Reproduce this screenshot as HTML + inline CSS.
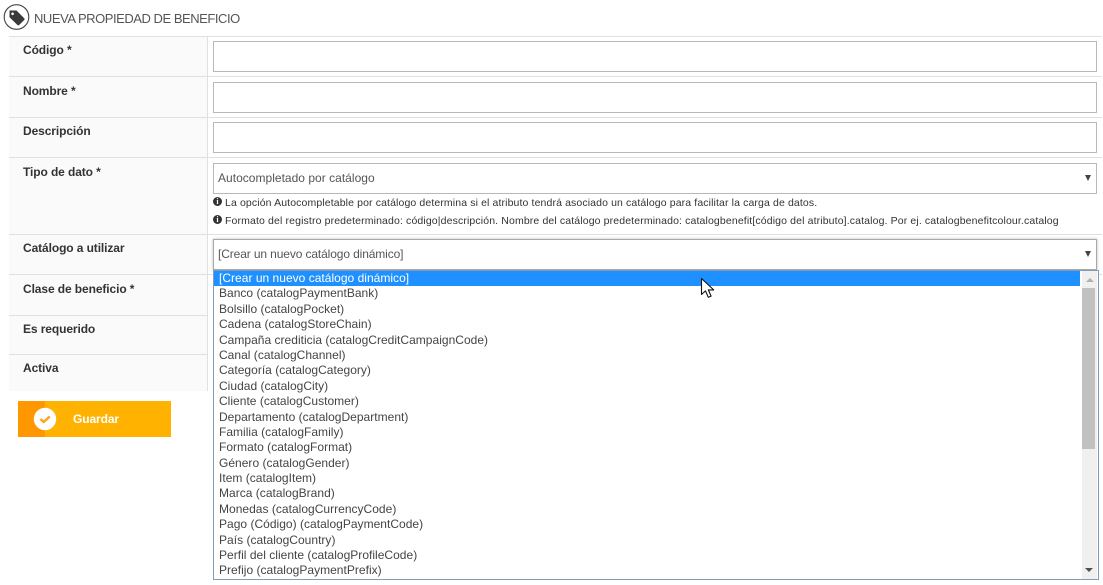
<!DOCTYPE html>
<html lang="es"><head><meta charset="utf-8"><title>Nueva propiedad de beneficio</title>
<style>
html,body{margin:0;padding:0;background:#fff;width:1103px;height:585px;overflow:hidden}
body{position:relative;font-family:"Liberation Sans",sans-serif;color:#333}
.a{position:absolute;white-space:nowrap}
.line{position:absolute;background:#e0e0e0;height:1px;left:9px;width:1093px}
.lbl{position:absolute;left:23px;font-size:12px;font-weight:bold;color:#333;line-height:14px;white-space:nowrap;letter-spacing:-.1px}
.inp{position:absolute;left:213px;width:882px;background:#fff;border:1px solid #b8b8b8;height:29px}
.val{position:absolute;left:218px;font-size:12px;line-height:14px;color:#555;white-space:nowrap;letter-spacing:.02px}
.help{position:absolute;left:225px;font-size:10.5px;line-height:13px;color:#333;white-space:nowrap;letter-spacing:.12px}
.inf{position:absolute;left:213px;width:9px;height:9px;background:#333;border-radius:50%;color:#fff;font:bold 8px/9px "Liberation Serif",serif;text-align:center}
.arr{position:absolute;left:1085px;width:0;height:0;border-left:3px solid transparent;border-right:3px solid transparent;border-top:6px solid #444}
.opt{position:absolute;left:219px;font-size:12px;line-height:15px;color:#444;white-space:nowrap;letter-spacing:.02px}
</style></head><body>
<div class="a" style="left:9px;top:37px;width:198px;height:354px;background:#fafafa"></div>
<div class="a" style="left:207px;top:37px;width:1px;height:354px;background:#e0e0e0"></div>
<div class="line" style="top:36px"></div>
<div class="line" style="top:76px"></div>
<div class="line" style="top:117px"></div>
<div class="line" style="top:157px"></div>
<div class="line" style="top:234px"></div>
<div class="line" style="top:274px"></div>
<div class="line" style="top:315px;width:199px"></div>
<div class="line" style="top:354px;width:199px"></div>

<svg class="a" style="left:3px;top:4px" width="27" height="27" viewBox="0 0 27 27">
<circle cx="13.5" cy="13" r="12.3" fill="#fff" stroke="#444" stroke-width="1.1"/>
<path d="M6.5 6.5h7l7.6 7.6a1.4 1.4 0 0 1 0 2l-4.8 4.8a1.4 1.4 0 0 1-2 0L6.5 13.3z" fill="#3a3a3a"/>
<circle cx="9.6" cy="9.8" r="1.3" fill="#fff"/>
</svg>
<div class="a" style="left:34px;top:11px;font-size:13px;line-height:15px;color:#555;letter-spacing:-.46px">NUEVA PROPIEDAD DE BENEFICIO</div>

<div class="lbl" style="top:43px">Código *</div>
<div class="lbl" style="top:84px">Nombre *</div>
<div class="lbl" style="top:124px">Descripción</div>
<div class="lbl" style="top:165px">Tipo de dato *</div>
<div class="lbl" style="top:241px">Catálogo a utilizar</div>
<div class="lbl" style="top:282px">Clase de beneficio *</div>
<div class="lbl" style="top:322px">Es requerido</div>
<div class="lbl" style="top:361px">Activa</div>

<div class="inp" style="top:41px"></div>
<div class="inp" style="top:82px"></div>
<div class="inp" style="top:122px"></div>
<div class="inp" style="top:163px"></div>
<div class="val" style="top:171px">Autocompletado por catálogo</div>
<div class="arr" style="top:175px"></div>

<div class="inf" style="top:197px">i</div>
<div class="help" style="top:197px">La opción Autocompletable por catálogo determina si el atributo tendrá asociado un catálogo para facilitar la carga de datos.</div>
<div class="inf" style="top:215px">i</div>
<div class="help" style="top:215px;letter-spacing:.13px">Formato del registro predeterminado: código|descripción. Nombre del catálogo predeterminado: catalogbenefit[código del atributo].catalog. Por ej. catalogbenefitcolour.catalog</div>

<div class="inp" style="top:239px;border-color:#a8a8a8;box-shadow:0 0 3px rgba(0,0,0,.25)"></div>
<div class="val" style="top:247px;letter-spacing:-.12px">[Crear un nuevo catálogo dinámico]</div>
<div class="arr" style="top:251px"></div>

<div class="a" style="left:18px;top:401px;width:153px;height:36px;background:#ffb200"></div>
<div class="a" style="left:18px;top:401px;width:27px;height:36px;background:#ff9800"></div>
<svg class="a" style="left:33px;top:407px" width="24" height="24" viewBox="0 0 24 24">
<circle cx="12" cy="12" r="11.2" fill="#fff"/>
<path d="M7.5 12l3.2 3 6-5.5" fill="none" stroke="#ffa412" stroke-width="2.4"/>
</svg>
<div class="a" style="left:73px;top:412px;font-size:12px;line-height:15px;font-weight:bold;color:#fff;letter-spacing:-.1px">Guardar</div>

<div class="a" style="left:213px;top:270px;width:884px;height:308px;background:#fff;border:1px solid #7f9db9"></div>
<div class="a" style="left:214px;top:271px;width:866px;height:15px;background:#1e90ff"></div>
<div class="a" style="left:1082px;top:271px;width:15px;height:308px;background:#f0f0f0"></div>
<div class="a" style="left:1082px;top:288px;width:13px;height:161px;background:#c1c1c1"></div>
<div class="a" style="left:1086px;top:278px;width:0;height:0;border-left:4px solid transparent;border-right:4px solid transparent;border-bottom:4px solid #b0b0b0"></div>
<div class="a" style="left:1085px;top:568px;width:0;height:0;border-left:4px solid transparent;border-right:4px solid transparent;border-top:4px solid #505050"></div>

<div class="opt" style="top:271px;color:#fff">[Crear un nuevo catálogo dinámico]</div>
<div class="opt" style="top:286px">Banco (catalogPaymentBank)</div>
<div class="opt" style="top:302px">Bolsillo (catalogPocket)</div>
<div class="opt" style="top:317px">Cadena (catalogStoreChain)</div>
<div class="opt" style="top:333px">Campaña crediticia (catalogCreditCampaignCode)</div>
<div class="opt" style="top:348px">Canal (catalogChannel)</div>
<div class="opt" style="top:363px">Categoría (catalogCategory)</div>
<div class="opt" style="top:379px">Ciudad (catalogCity)</div>
<div class="opt" style="top:394px">Cliente (catalogCustomer)</div>
<div class="opt" style="top:410px">Departamento (catalogDepartment)</div>
<div class="opt" style="top:425px">Familia (catalogFamily)</div>
<div class="opt" style="top:440px">Formato (catalogFormat)</div>
<div class="opt" style="top:456px">Género (catalogGender)</div>
<div class="opt" style="top:471px">Item (catalogItem)</div>
<div class="opt" style="top:486px">Marca (catalogBrand)</div>
<div class="opt" style="top:502px">Monedas (catalogCurrencyCode)</div>
<div class="opt" style="top:517px">Pago (Código) (catalogPaymentCode)</div>
<div class="opt" style="top:533px">País (catalogCountry)</div>
<div class="opt" style="top:548px">Perfil del cliente (catalogProfileCode)</div>
<div class="opt" style="top:563px">Prefijo (catalogPaymentPrefix)</div>

<svg class="a" style="left:700px;top:277px" width="16" height="24" viewBox="0 0 16 24">
<path d="M1.5 1.5v16l4-3.6 2.8 6.4 2.8-1.2-2.8-6.2h5.4z" fill="#fff" stroke="#111" stroke-width="1.1" stroke-linejoin="round"/>
</svg>
</body></html>
